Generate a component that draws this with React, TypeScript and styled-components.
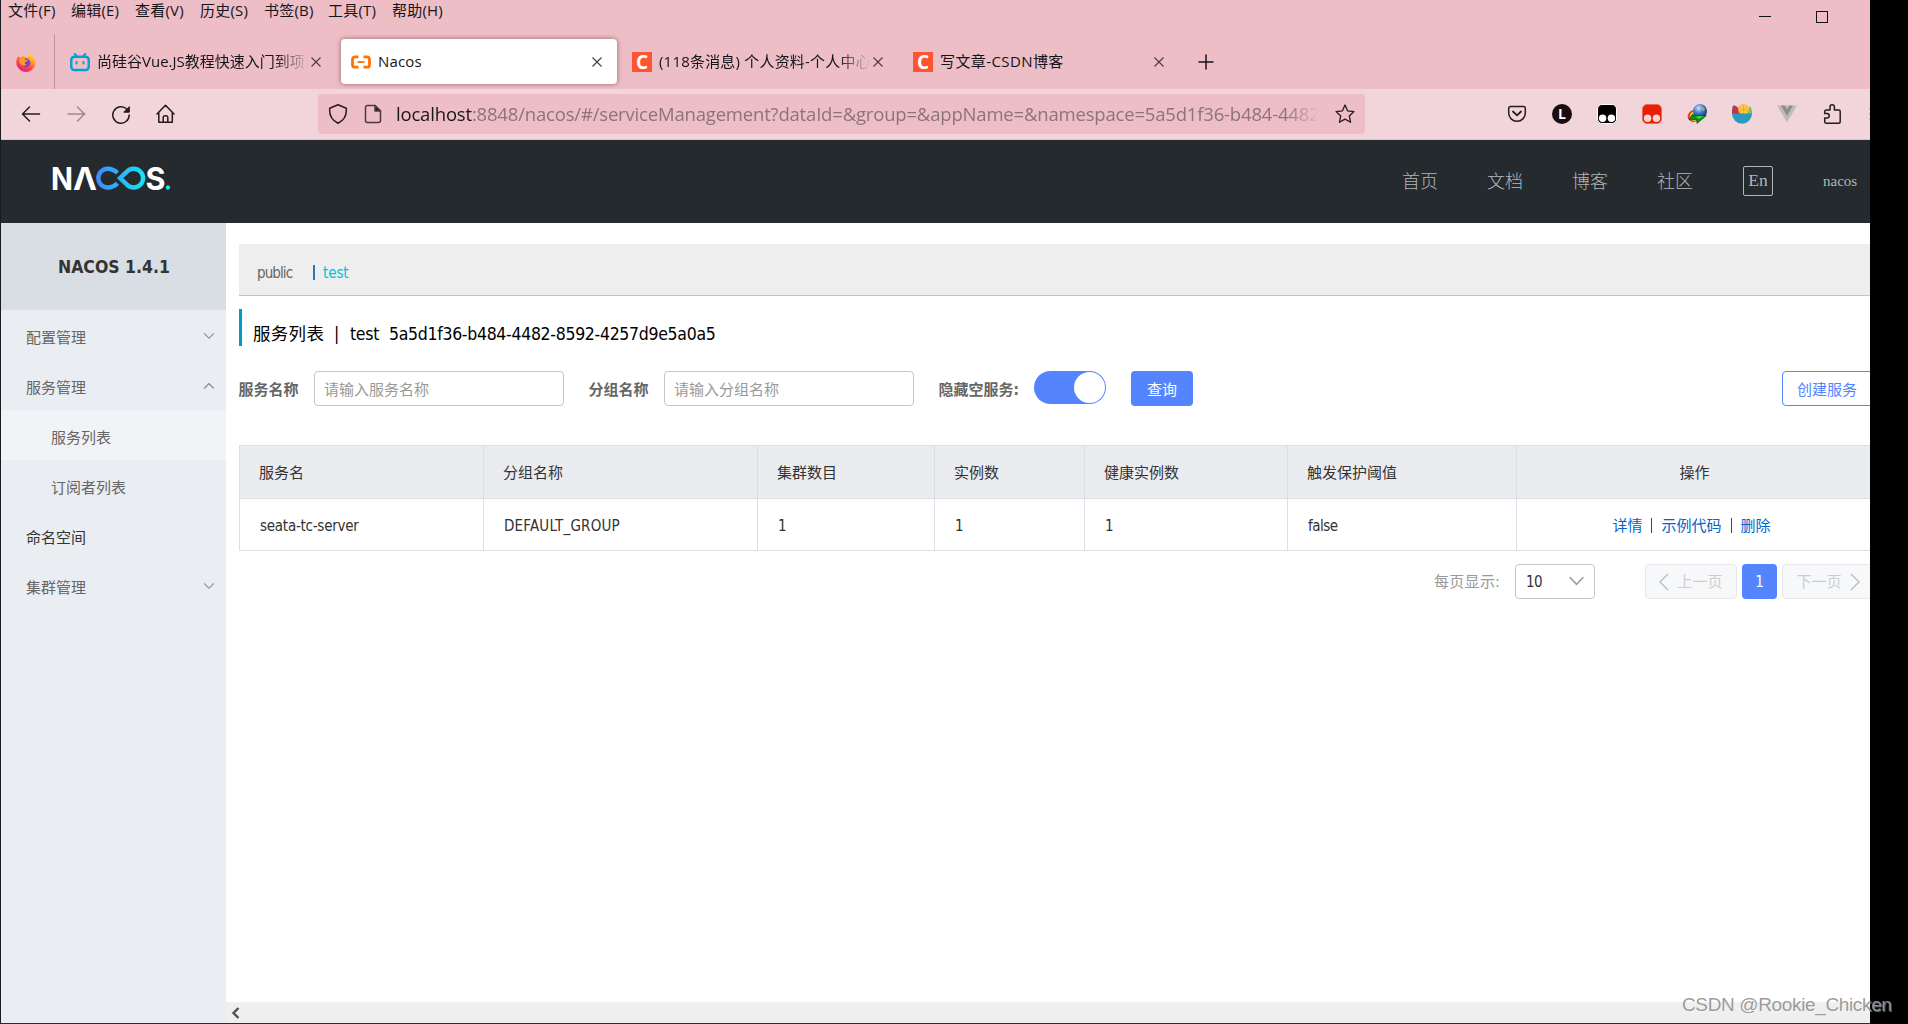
import React from "react";
import styled, { createGlobalStyle } from "styled-components";

const GlobalStyle = createGlobalStyle`
  * { box-sizing: border-box; }
  html, body { margin: 0; padding: 0; background: #000; overflow: hidden; }
  body { width: 1908px; height: 1024px; }
  svg { display: block; flex: none; }
`;

const uiFont = `"Open Sans", "Noto Sans CJK SC", sans-serif`;
const pageFont = `"DejaVu Sans Condensed", "Noto Sans CJK SC", sans-serif`;

const Screen = styled.div`
  position: relative;
  width: 1908px;
  height: 1024px;
  background: #000;
  overflow: hidden;
  font-family: ${pageFont};
  white-space: pre;
`;

const Browser = styled.div`
  width: 1870px;
  height: 1024px;
  overflow: hidden;
  border-left: 1px solid #1b1b1d;
  border-bottom: 1px solid #2a2b30;
  display: flex;
  flex-direction: column;
`;

const TitleBar = styled.div`
  flex: none;
  height: 89px;
  background: #edbec5;
  font-family: ${uiFont};
  color: #15141a;
`;

const MenuRow = styled.div`
  height: 34px;
  display: flex;
  justify-content: space-between;
`;

const MenuList = styled.div`
  display: flex;
  gap: 16px;
  padding-left: 7px;
`;

const MenuItem = styled.span<{ $w: number }>`
  width: ${(p) => p.$w}px;
  font-size: 15px;
  line-height: 20px;
  letter-spacing: 0.2px;
`;

const WindowButtons = styled.div`
  display: flex;
  align-items: center;
  gap: 44px;
  padding-right: 41px;
`;

const TabRow = styled.div`
  display: flex;
  height: 55px;
`;

const PinnedTab = styled.div`
  width: 54px;
  display: flex;
  align-items: center;
  padding-left: 15px;
  border-right: 1px solid #b8949c;
  margin-right: 5px;
`;

const Tab = styled.div<{ $active?: boolean }>`
  width: 276px;
  height: 45px;
  margin: 5px 5px 0 0;
  padding-left: 10px;
  display: flex;
  align-items: center;
  border-radius: 4px;
  background: ${(p) => (p.$active ? "#fff" : "transparent")};
  box-shadow: ${(p) => (p.$active ? "0 0 5px rgba(90, 50, 60, 0.65)" : "none")};
`;

const TabLabel = styled.span<{ $fade?: boolean; $spacing?: number }>`
  width: 211px;
  margin: 0 0 2px 7px;
  overflow: hidden;
  font-size: 15px;
  line-height: 24px;
  letter-spacing: ${(p) => p.$spacing ?? 0.15}px;
  mask-image: ${(p) => (p.$fade ? "linear-gradient(to left, transparent, #000 32px)" : "none")};
`;

const FavBox = styled.span`
  width: 20px;
  height: 20px;
  background: #fc5531;
  color: #fff;
  display: flex;
  align-items: center;
  justify-content: center;
  font: 700 19px/20px "Open Sans", sans-serif;
`;

const PlusHolder = styled.div`
  display: flex;
  align-items: center;
  padding-left: 14px;
`;

const Toolbar = styled.div`
  flex: none;
  height: 51px;
  background: #f1d5da;
  border-bottom: 1px solid #e3bcc4;
  display: flex;
  align-items: center;
`;

const NavButtons = styled.div`
  width: 317px;
  display: flex;
  gap: 25px;
  padding-left: 20px;
`;

const UrlBar = styled.div`
  width: 1047px;
  height: 40px;
  background: #edbec5;
  border-radius: 4px;
  display: flex;
  align-items: center;
  padding-left: 10px;
`;

const UrlText = styled.div`
  width: 924px;
  margin: 0 15px 0 13px;
  overflow: hidden;
  font: 18.5px/36px ${uiFont};
  letter-spacing: -0.18px;
  color: #8e737a;
  mask-image: linear-gradient(to left, transparent, #000 34px);
`;

const UrlHost = styled.span`
  color: #1c1518;
`;

const Extensions = styled.div`
  flex: 1;
  display: flex;
  align-items: center;
  gap: 25px;
  padding-left: 142px;
  overflow: hidden;
`;

const Header = styled.div`
  flex: none;
  height: 83px;
  background: #252a2e;
  display: flex;
  align-items: center;
  justify-content: space-between;
  padding: 0 0 2px 50px;
`;

const LogoHolder = styled.div`
  padding-bottom: 5px;
`;

const HeaderNav = styled.div`
  display: flex;
  align-items: center;
  gap: 50px;
  color: #b3b6b8;
  padding-right: 12px;
`;

const NavLink = styled.span`
  width: 35px;
  font-size: 18px;
  line-height: 29px;
  font-weight: 300;
  padding-top: 1px;
  text-indent: -1px;
`;

const LangSwitch = styled.span`
  width: 30px;
  height: 30px;
  border: 1px solid #b3b6b8;
  border-radius: 2px;
  font: 17.5px/27px "Liberation Serif", serif;
  text-align: center;
`;

const UserName = styled.span`
  width: 35px;
  font: 15px/30px "Liberation Serif", serif;
`;

const Body = styled.div`
  flex: 1;
  display: flex;
  min-height: 0;
`;

const Sidebar = styled.div`
  flex: none;
  width: 225px;
  background: #eaedf1;
`;

const SideTitle = styled.div`
  height: 87px;
  background: #d9dde4;
  font-weight: 700;
  font-size: 17.5px;
  line-height: 88px;
  color: #333;
  padding-left: 57px;
`;

const SideItem = styled.div<{ $sub?: boolean; $active?: boolean; $dark?: boolean }>`
  height: 50px;
  display: flex;
  justify-content: space-between;
  align-items: center;
  padding: 3px 11px 0 ${(p) => (p.$sub ? 50 : 25)}px;
  font-size: 15px;
  color: ${(p) => (p.$dark ? "#333" : "#666")};
  background: ${(p) => (p.$active ? "#f2f3f7" : "transparent")};
`;

const Main = styled.div`
  flex: 1;
  min-width: 0;
  background: #fff;
  display: flex;
  flex-direction: column;
`;

const Content = styled.div`
  flex: 1;
  padding: 21px 0 0 13px;
  width: 1648px;
`;

const NamespaceBar = styled.div`
  height: 52px;
  background: #eee;
  border-bottom: 1px solid #c4c4c4;
  padding: 6px 0 0 18px;
  display: flex;
  align-items: center;
  font-size: 15px;
`;

const Namespace = styled.span<{ $active?: boolean }>`
  width: ${(p) => (p.$active ? 40 : 54)}px;
  color: ${(p) => (p.$active ? "#00c1de" : "#666")};
  letter-spacing: ${(p) => (p.$active ? -0.1 : -0.9)}px;
`;

const NamespaceDivider = styled.span`
  width: 2px;
  height: 15px;
  margin: 0 8px 0 2px;
  background: #2c76b5;
`;

const Heading = styled.div`
  height: 37px;
  margin-top: 13px;
  border-left: 3px solid #09c;
  padding: 7px 0 0 11px;
  font-size: 17.5px;
  line-height: 37px;
  color: #000;
  display: flex;
`;

const HeadingPart = styled.span<{ $w: number; $spacing?: number }>`
  width: ${(p) => p.$w}px;
  letter-spacing: ${(p) => p.$spacing ?? 0}px;
`;

const Filters = styled.div`
  display: flex;
  margin-top: 25px;
  height: 35px;
  font-size: 15px;
  line-height: 38px;

  > * {
    flex: none;
  }
`;

const FieldLabel = styled.label<{ $w: number }>`
  width: ${(p) => p.$w}px;
  font-weight: 700;
  color: #666;
  text-indent: -0.5px;
`;

const Input = styled.div`
  width: 250px;
  height: 35px;
  margin-right: 25px;
  border: 1px solid #c4c6cf;
  border-radius: 4px;
  padding-left: 9px;
  line-height: 36px;
  color: #999;
`;

const Switch = styled.div`
  width: 72px;
  height: 33px;
  border-radius: 17px;
  background: #5584ff;
  padding: 1px;
  display: flex;
  justify-content: flex-end;
`;

const Knob = styled.span`
  width: 31px;
  height: 31px;
  border-radius: 50%;
  background: #fff;
`;

const PrimaryButton = styled.button`
  width: 62px;
  height: 35px;
  margin-left: 25px;
  border: 0;
  padding: 3px 0 0;
  border-radius: 4px;
  background: #5584ff;
  color: #fff;
  font: 15px/32px ${pageFont};
`;

const OutlineButton = styled.button`
  width: 104px;
  height: 35px;
  margin-left: 589px;
  border: 1px solid #5584ff;
  padding: 3px 0 0 14px;
  border-radius: 4px;
  background: #fff;
  color: #5584ff;
  font: 15px/30px ${pageFont};
  text-align: left;
`;

const Table = styled.div`
  margin-top: 39px;
  width: 1635px;
  border: 1px solid #dcdee3;
  font-size: 15px;
  color: #333;
`;

const TableRow = styled.div<{ $head?: boolean }>`
  display: grid;
  grid-template-columns: 244px 274px 177px 150px 203px 229px 356px;
  height: ${(p) => (p.$head ? 53 : 51)}px;
  background: ${(p) => (p.$head ? "#ebecf0" : "#fff")};
  border-bottom: ${(p) => (p.$head ? "1px solid #dcdee3" : "0")};
`;

const Cell = styled.div<{ $center?: boolean; $spacing?: number; $pull?: number; $cjk?: boolean }>`
  border-right: 1px solid #dcdee3;
  padding: ${(p) => (p.$cjk ? 0 : 2)}px ${(p) => p.$pull ?? 0}px ${(p) => (p.$cjk ? 1 : 0)}px ${(p) => (p.$center ? 0 : p.$cjk ? 19 : 20)}px;
  display: flex;
  align-items: center;
  justify-content: ${(p) => (p.$center ? "center" : "flex-start")};
  letter-spacing: ${(p) => p.$spacing ?? 0}px;
`;

const ActionLink = styled.a`
  color: #06c;
`;

const ActionDivider = styled.span`
  width: 1px;
  height: 15px;
  margin: 2px 9px 0 9px;
  background: #444;
`;

const Pagination = styled.div`
  display: flex;
  margin-top: 13px;
  padding-left: 1195px;
  height: 35px;
  font-size: 15px;
  line-height: 36px;
  color: #999;

  > * {
    flex: none;
  }
`;

const PageSizeLabel = styled.span`
  width: 81px;
  letter-spacing: 0.3px;
`;

const PageSelect = styled.div`
  width: 80px;
  border: 1px solid #c4c6cf;
  border-radius: 4px;
  color: #333;
  padding: 1px 9px 0 10px;
  display: flex;
  align-items: center;
  justify-content: space-between;
  margin-right: 50px;
  letter-spacing: -0.5px;
`;

const PageStep = styled.div`
  width: 92px;
  border: 1px solid #e6e7eb;
  border-radius: 4px;
  background: #f7f8fa;
  color: #ccc;
  display: flex;
  align-items: center;
  justify-content: center;
  gap: 8px;
`;

const PageNumber = styled.div`
  width: 35px;
  margin: 0 5px;
  border-radius: 4px;
  background: #5584ff;
  color: #fff;
  text-align: center;
`;

const ScrollBar = styled.div`
  height: 21px;
  flex: none;
  background: #efefef;
  display: flex;
  align-items: center;
  padding-left: 5px;
`;

const Watermark = styled.div`
  position: absolute;
  left: 1682px;
  top: 993px;
  font: 19px/24px "Liberation Sans", sans-serif;
  letter-spacing: -0.36px;
  color: rgba(150, 150, 150, 0.95);
  text-shadow: 1px 1px 0 rgba(255, 255, 255, 0.4);
`;

const CloseIcon = () => (
  <svg width="16" height="16" viewBox="0 0 16 16" stroke="#4a3a3e" strokeWidth="1.1">
    <path d="M3.5 3.5l9 9M12.5 3.5l-9 9" />
  </svg>
);

const Chevron = ({ up, size = 12, color = "#888" }: { up?: boolean; size?: number; color?: string }) => (
  <svg width={size} height={size} viewBox="0 0 12 12" fill="none" stroke={color} strokeWidth="1.1">
    <path d={up ? "M1.2 7.5L6 2.5l4.8 5" : "M1.2 2.3L6 7.3l4.8-5"} />
  </svg>
);

const FirefoxIcon = () => (
  <svg width="20" height="20" viewBox="0 0 20 20">
    <defs>
      <linearGradient id="fx" x1="0.8" y1="0" x2="0.25" y2="1">
        <stop offset="0" stopColor="#fff44f" />
        <stop offset="0.35" stopColor="#ffa130" />
        <stop offset="0.65" stopColor="#ff4a41" />
        <stop offset="1" stopColor="#e31587" />
      </linearGradient>
    </defs>
    <path d="M12.500 0c1 1.500 2.500 2.500 3.500 4l1-.5c3 4 3.500 9 .5 12.800a9.600 9.600 0 0 1-15 0C-.5 13-.2 7.500 2.200 4l1.600 1.500L6 5l1-1.500L9.500 5.200 12 5z" fill="url(#fx)" />
    <circle cx="10" cy="10.800" r="4.300" fill="#7543e3" />
    <path d="M3 7c3-1.500 5-.6 6 .3 1 .8 2 .7 3 .9-1 1.500-2.600 1.300-3 2.300C8.500 11.500 9 12.500 11 12.500 8 15 4 13 3.500 10z" fill="#ff9a26" />
  </svg>
);

const BiliIcon = () => (
  <svg width="20" height="20" viewBox="0 0 20 20" fill="none" stroke="#00a1d6" strokeWidth="2.400" strokeLinecap="round">
    <rect x="1.300" y="4.800" width="17.400" height="13.200" rx="3" />
    <path d="M4.800 1.800l1.700 2M15.200 1.800l-1.700 2M6.500 10v1.500M13.500 10v1.500" strokeWidth="2" />
  </svg>
);

const AliIcon = () => (
  <svg width="20" height="20" viewBox="0 0 20 20" fill="none" stroke="#ff7300" strokeWidth="2.800">
    <path d="M7.500 4.800H4a2.500 2.500 0 0 0-2.500 2.500v5.400A2.500 2.500 0 0 0 4 15.200h3.500M12.500 4.800H16a2.500 2.500 0 0 1 2.500 2.500v5.400a2.500 2.500 0 0 1-2.500 2.500h-3.500" />
    <path d="M6.500 10h7" strokeWidth="1.800" />
  </svg>
);

const ink = { fill: "none", stroke: "#251b1e", strokeWidth: 1.5, strokeLinecap: "round", strokeLinejoin: "round" } as const;

const BackIcon = ({ flip }: { flip?: boolean }) => (
  <svg width="20" height="20" viewBox="0 0 20 20" {...ink} opacity={flip ? 0.4 : 1}>
    <path d={flip ? "M2 10h17M11.500 3l7 7-7 7" : "M18.500 10H1.500M8.500 3l-7 7 7 7"} />
  </svg>
);

const ReloadIcon = () => (
  <svg width="20" height="20" viewBox="0 0 20 20" {...ink}>
    <path d="M15.800 5.200A8.200 8.200 0 1 0 18.200 11" />
    <path d="M18.300 3v5.200h-5.200z" fill="#251b1e" strokeWidth="1" />
  </svg>
);

const HomeIcon = () => (
  <svg width="20" height="20" viewBox="0 0 20 20" {...ink}>
    <path d="M1 10L9.500 1.200l8.500 8.800M2.800 8.500v9.800h13.500V8.500M7.200 18V13.500A1.700 1.700 0 0 1 8.900 11.800h1.200A1.700 1.700 0 0 1 11.800 13.500V18" />
  </svg>
);

const ShieldIcon = () => (
  <svg width="20" height="20" viewBox="0 0 20 20" {...ink}>
    <path d="M10 .8L18.300 4.200C18.800 10.500 17 16 10 19.200 3 16 1.200 10.500 1.700 4.200z" />
  </svg>
);

const PageIconSvg = styled.svg`
  margin-left: 15px;
`;

const PageIcon = () => (
  <PageIconSvg width="20" height="20" viewBox="0 0 20 20" {...ink} stroke="#4a3a3e">
    <path d="M12 1.500H4.500A2 2 0 0 0 2.500 3.500v13a2 2 0 0 0 2 2h11a2 2 0 0 0 2-2V7z" />
    <path d="M12 1.500V7h5.500z" fill="#251b1e" />
  </PageIconSvg>
);

const StarIcon = () => (
  <svg width="20" height="20" viewBox="0 0 20 20" {...ink} strokeWidth="1.300">
    <path d="M10 1l2.700 5.900 6.300.7-4.700 4.300 1.300 6.400L10 15.100l-5.600 3.200 1.300-6.400L1 7.600l6.300-.7z" />
  </svg>
);

const PocketIcon = () => (
  <svg width="20" height="20" viewBox="0 0 20 20" {...ink}>
    <path d="M3.500 2.500h13A1.800 1.800 0 0 1 18.300 4.300V9a8.300 8.300 0 0 1-16.600 0V4.300A1.800 1.800 0 0 1 3.500 2.500z" />
    <path d="M6 7.500l4 3.800 4-3.800" strokeWidth="1.800" />
  </svg>
);

const LetterIcon = () => (
  <svg width="20" height="20" viewBox="0 0 20 20">
    <circle cx="10" cy="10" r="10" fill="#1a0d10" />
    <text x="6" y="15" fontFamily="Open Sans" fontWeight="700" fontSize="14" fill="#fff">L</text>
  </svg>
);

const MonkeyIcon = ({ color, eye, halo }: { color: string; eye: string; halo: string }) => (
  <svg width="20" height="20" viewBox="0 0 20 20">
    <rect x="0.500" y="0.500" width="19" height="19" rx="4.500" fill={color} stroke={halo} />
    <circle cx="5.600" cy="14.300" r="3.700" fill={eye} />
    <circle cx="14.400" cy="14.300" r="3.700" fill={eye} />
  </svg>
);

const GlobeIcon = () => (
  <svg width="20" height="20" viewBox="0 0 20 20" fill="none">
    <defs>
      <radialGradient id="gl" cx="0.4" cy="0.3" r="0.7">
        <stop offset="0" stopColor="#cfe4ff" />
        <stop offset="0.5" stopColor="#3f7fd8" />
        <stop offset="1" stopColor="#12306e" />
      </radialGradient>
    </defs>
    <g transform="rotate(-25 8 11)">
      <ellipse cx="7.500" cy="11.500" rx="7.300" ry="6" fill="#e33b1e" />
      <ellipse cx="8" cy="12" rx="6" ry="4.800" fill="#ffd91f" />
      <ellipse cx="8.500" cy="12.500" rx="4.800" ry="3.600" fill="#2fb0e8" />
    </g>
    <circle cx="13" cy="7" r="7" fill="url(#gl)" />
    <path d="M14 1.500l4 3.500-1.500 2-2.500-1z" fill="#b3ad45" />
    <path d="M5 10.500l4.500 1.500 10-.5L10 19.500l-.5-3.500L2 15.500z" fill="#0d8a12" stroke="#043d06" strokeWidth=".5" />
    <path d="M8 12.500l9-.5-5 3z" fill="#3fe03a" />
  </svg>
);

const FruitIcon = () => (
  <svg width="20" height="20" viewBox="0 0 20 20">
    <path d="M1 1.500C4 1 8 4 9 10H0C0 7 0 4 1 1.500z" fill="#b5394a" />
    <path d="M18 2c2 2.500 2 5 2 8h-7z" fill="#76c45f" />
    <circle cx="11.500" cy="5.400" r="5.400" fill="#ffb52e" />
    <circle cx="11.500" cy="5.400" r="3.800" fill="#ffd04a" />
    <path d="M11.500 1.500v8M8 3.500l7 4M15 3.500l-7 4" stroke="#f39b1d" strokeWidth="0.800" />
    <path d="M0 9.500h20a10 10.300 0 0 1-20 0z" fill="#2b9abf" />
  </svg>
);

const VueIcon = () => (
  <svg width="20" height="20" viewBox="0 0 20 20">
    <path d="M0 1.500h20L10 18.500z" fill="#bfbcbd" />
    <path d="M4 1.500h3.700L10 5.500l2.300-4H16L10 12z" fill="#8f8c8d" />
  </svg>
);

const PuzzleIcon = () => (
  <svg width="20" height="20" viewBox="0 0 20 20" {...ink}>
    <path d="M4.200 19.200A1.500 1.500 0 0 1 2.700 17.700V14H5a2.200 2.200 0 0 0 0-4.500H2.700V7.500A1.500 1.500 0 0 1 4.200 6H8V3a2.200 2.200 0 0 1 4.400 0V6h4.300a1.500 1.500 0 0 1 1.500 1.500v10.200a1.500 1.500 0 0 1-1.500 1.500z" />
  </svg>
);

const MoreIcon = () => (
  <svg width="20" height="20" viewBox="0 0 20 20" stroke="#8d767b" strokeWidth="1.200">
    <path d="M2.300 5h15M2.300 10h15M2.300 15h15" />
  </svg>
);

const NacosLogo = () => (
  <svg width="122" height="28" viewBox="51 164.500 122 28">
    <defs>
      <linearGradient id="inf" gradientUnits="userSpaceOnUse" x1="96" y1="0" x2="145" y2="0">
        <stop offset="0" stopColor="#4187ff" />
        <stop offset="1" stopColor="#14e4f7" />
      </linearGradient>
    </defs>
    <g fontFamily="Inter" fontWeight="700" fontSize="31.500" fill="#fff">
      <text x="51" y="190" textLength="22" lengthAdjust="spacingAndGlyphs">N</text>
      <text x="73" y="190" textLength="24" lengthAdjust="spacingAndGlyphs">Λ</text>
      <text x="145.500" y="190" textLength="20" lengthAdjust="spacingAndGlyphs">S</text>
    </g>
    <g fill="none" stroke="url(#inf)" strokeWidth="4.400">
      <path d="M117.500 173.300C114.500 170.500 111.500 169.200 107.700 169.200a9.400 9.400 0 0 0 0 18.800c3.800 0 6.800-1.300 9.800-4.100" />
      <path d="M120 178.600L127.200 171.800C129 170 131 169.200 133.700 169.200a9.400 9.400 0 0 1 0 18.800c-2.700 0-4.700-.8-6.500-2.600z" />
    </g>
    <circle cx="167.900" cy="188" r="2.200" fill="#14e4f7" />
  </svg>
);

const Step = ({ next }: { next?: boolean }) => (
  <svg width="10" height="18" viewBox="0 0 10 18" fill="none" stroke="#bbb" strokeWidth="1.300">
    <path d={next ? "M1 1l8 8-8 8" : "M9 1L1 9l8 8"} />
  </svg>
);

const menus: [string, number][] = [
  ["文件(F)", 47], ["编辑(E)", 48], ["查看(V)", 49], ["历史(S)", 48], ["书签(B)", 48], ["工具(T)", 48], ["帮助(H)", 52],
];

const columns = ["服务名", "分组名称", "集群数目", "实例数", "健康实例数", "触发保护阈值"];

export default function App() {
  return (
    <Screen>
      <GlobalStyle />
      <Browser>
        <TitleBar>
          <MenuRow>
            <MenuList>
              {menus.map(([m, w]) => <MenuItem key={m} $w={w}>{m}</MenuItem>)}
            </MenuList>
            <WindowButtons>
              <svg width="13" height="13" viewBox="0 0 13 13"><path d="M0 5.500h12" stroke="#111" /></svg>
              <svg width="13" height="13" viewBox="0 0 13 13"><rect x="0.500" y="0.500" width="11" height="11" fill="none" stroke="#111" /></svg>
            </WindowButtons>
          </MenuRow>
          <TabRow>
            <PinnedTab><FirefoxIcon /></PinnedTab>
            <Tab><BiliIcon /><TabLabel $fade $spacing={0}>尚硅谷Vue.JS教程快速入门到项目</TabLabel><CloseIcon /></Tab>
            <Tab $active><AliIcon /><TabLabel>Nacos</TabLabel><CloseIcon /></Tab>
            <Tab><FavBox>C</FavBox><TabLabel $fade $spacing={0.2}>(118条消息) 个人资料-个人中心</TabLabel><CloseIcon /></Tab>
            <Tab><FavBox>C</FavBox><TabLabel $spacing={0.4}>写文章-CSDN博客</TabLabel><CloseIcon /></Tab>
            <PlusHolder>
              <svg width="16" height="16" viewBox="0 0 16 16" stroke="#15141a" strokeWidth="1.500"><path d="M0.500 8h15M8 0.500v15" /></svg>
            </PlusHolder>
          </TabRow>
        </TitleBar>
        <Toolbar>
          <NavButtons>
            <BackIcon /><BackIcon flip /><ReloadIcon /><HomeIcon />
          </NavButtons>
          <UrlBar>
            <ShieldIcon />
            <PageIcon />
            <UrlText><UrlHost>localhost</UrlHost>:8848/nacos/#/serviceManagement?dataId=&amp;group=&amp;appName=&amp;namespace=5a5d1f36-b484-4482-8592</UrlText>
            <StarIcon />
          </UrlBar>
          <Extensions>
            <PocketIcon />
            <LetterIcon />
            <MonkeyIcon color="#000" eye="#fff" halo="#fff" />
            <MonkeyIcon color="#e81f00" eye="#f7d5d5" halo="#ee6a58" />
            <GlobeIcon />
            <FruitIcon />
            <VueIcon />
            <PuzzleIcon />
            <MoreIcon />
          </Extensions>
        </Toolbar>
        <Header>
          <LogoHolder><NacosLogo /></LogoHolder>
          <HeaderNav>
            <NavLink>首页</NavLink>
            <NavLink>文档</NavLink>
            <NavLink>博客</NavLink>
            <NavLink>社区</NavLink>
            <LangSwitch>En</LangSwitch>
            <UserName>nacos</UserName>
          </HeaderNav>
        </Header>
        <Body>
          <Sidebar>
            <SideTitle>NACOS 1.4.1</SideTitle>
            <SideItem>配置管理<Chevron /></SideItem>
            <SideItem>服务管理<Chevron up /></SideItem>
            <SideItem $sub $active>服务列表</SideItem>
            <SideItem $sub>订阅者列表</SideItem>
            <SideItem $dark>命名空间</SideItem>
            <SideItem>集群管理<Chevron /></SideItem>
          </Sidebar>
          <Main>
            <Content>
              <NamespaceBar>
                <Namespace>public</Namespace>
                <NamespaceDivider />
                <Namespace $active>test</Namespace>
              </NamespaceBar>
              <Heading>
                <HeadingPart $w={81} $spacing={0.3}>服务列表</HeadingPart>
                <HeadingPart $w={16}>|</HeadingPart>
                <HeadingPart $w={39} $spacing={-0.3}>test</HeadingPart>
                <HeadingPart $w={340} $spacing={-0.3}>5a5d1f36-b484-4482-8592-4257d9e5a0a5</HeadingPart>
              </Heading>
              <Filters>
                <FieldLabel $w={75}>服务名称</FieldLabel>
                <Input>请输入服务名称</Input>
                <FieldLabel $w={75}>分组名称</FieldLabel>
                <Input>请输入分组名称</Input>
                <FieldLabel $w={95}>隐藏空服务:</FieldLabel>
                <Switch><Knob /></Switch>
                <PrimaryButton>查询</PrimaryButton>
                <OutlineButton>创建服务</OutlineButton>
              </Filters>
              <Table>
                <TableRow $head>
                  {columns.map((c) => <Cell key={c} $cjk>{c}</Cell>)}
                  <Cell $center $cjk>操作</Cell>
                </TableRow>
                <TableRow>
                  <Cell $spacing={-0.25}>seata-tc-server</Cell>
                  <Cell $spacing={0.2}>DEFAULT_GROUP</Cell>
                  <Cell>1</Cell>
                  <Cell>1</Cell>
                  <Cell>1</Cell>
                  <Cell $spacing={-0.5}>false</Cell>
                  <Cell $center $cjk $pull={6}>
                    <ActionLink>详情</ActionLink>
                    <ActionDivider />
                    <ActionLink>示例代码</ActionLink>
                    <ActionDivider />
                    <ActionLink>删除</ActionLink>
                  </Cell>
                </TableRow>
              </Table>
              <Pagination>
                <PageSizeLabel>每页显示:</PageSizeLabel>
                <PageSelect>10<Chevron size={17} color="#999" /></PageSelect>
                <PageStep><Step />上一页</PageStep>
                <PageNumber>1</PageNumber>
                <PageStep>下一页<Step next /></PageStep>
              </Pagination>
            </Content>
            <ScrollBar>
              <svg width="9" height="12" viewBox="0 0 9 12" fill="none" stroke="#505050" strokeWidth="2.400"><path d="M7.500 1L2.500 6l5 5" /></svg>
            </ScrollBar>
          </Main>
        </Body>
      </Browser>
      <Watermark>CSDN @Rookie_Chicken</Watermark>
    </Screen>
  );
}
